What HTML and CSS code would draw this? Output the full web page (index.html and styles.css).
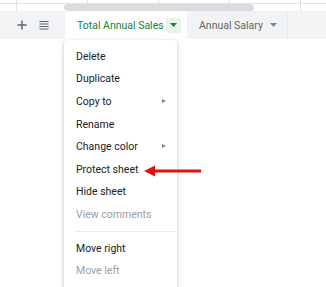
FILE: index.html
```html
<!DOCTYPE html>
<html>
<head>
<meta charset="utf-8">
<link rel="stylesheet" href="styles.css">
</head>
<body>
<div class="page">
  <div class="grid">
    <div class="cells">
      <div class="cell c0"></div>
      <div class="cell c1"></div>
      <div class="cell c1"></div>
      <div class="cell c1"></div>
      <div class="cell c1"></div>
      <div class="cell c2"></div>
    </div>
    <div class="thumb"></div>
  </div>
  <div class="tabbar">
    <div class="tools">
      <svg class="ico" width="12" height="12" viewBox="0 0 12 12"><path d="M6 1.5v9M1.5 6h9" stroke="#5f6368" stroke-width="1.4"/></svg>
      <svg class="ico" width="12" height="12" viewBox="0 0 12 12"><path d="M1.5 2.5h9M1.5 5h9M1.5 7.5h9M1.5 10h9" stroke="#5f6368" stroke-width="1.2"/></svg>
    </div>
    <div class="tab active">
      <span class="lbl">Total Annual Sales</span>
      <span class="dd"><svg width="7" height="4" viewBox="0 0 7 4"><path d="M0 0h7L3.5 4z" fill="#188038"/></svg></span>
    </div>
    <div class="tab">
      <span class="lbl">Annual Salary</span>
      <span class="dd plain"><svg width="7" height="4" viewBox="0 0 7 4"><path d="M0 0h7L3.5 4z" fill="#80868b"/></svg></span>
    </div>
    <div class="rest"></div>
  </div>
  <div class="content">
    <div class="menu">
      <div class="item">Delete</div>
      <div class="item">Duplicate</div>
      <div class="item">Copy to <span class="sub"></span></div>
      <div class="item">Rename</div>
      <div class="item">Change color <span class="sub"></span></div>
      <div class="item">Protect sheet</div>
      <div class="item">Hide sheet</div>
      <div class="item dis">View comments</div>
      <div class="sep"></div>
      <div class="item">Move right</div>
      <div class="item dis">Move left</div>
    </div>
    <svg class="arrow" width="58" height="12" viewBox="0 0 58 12"><path d="M10 6H57" stroke="#e01010" stroke-width="3"/><path d="M0 6L11 0.5V11.5z" fill="#e01010"/></svg>
  </div>
</div>
</body>
</html>
```
FILE: styles.css
```css
html, body {
  margin: 0;
  padding: 0;
  background: #fff;
}
.page {
  width: 326px;
  height: 287px;
  overflow: hidden;
  font-family: Roboto, "Liberation Sans", sans-serif;
  position: relative;
}
.grid {
  height: 11px;
  position: relative;
  background: #fff;
}
.cells {
  display: flex;
  height: 11px;
}
.cell {
  border-right: 1px solid #e2e3e3;
  height: 11px;
  box-sizing: border-box;
}
.cells .cell {
  background: linear-gradient(#e2e3e3, #e2e3e3) 0 3px / 100% 1px no-repeat;
}
.c0 { width: 17px; background: #f8f9fa; }
.c1 { width: 71px; }
.c2 { flex: 1; border-right: none; }
.thumb {
  position: absolute;
  left: 64px;
  top: 4px;
  width: 190px;
  height: 7px;
  border-radius: 4px;
  background: #dadce0;
}
.tabbar {
  display: flex;
  height: 28px;
  background: #f1f3f4;
  font-size: 10.5px;
  align-items: stretch;
  white-space: nowrap;
}
.tools {
  width: 65px;
  flex: none;
  display: flex;
  align-items: center;
  gap: 10px;
  padding-left: 16px;
  box-sizing: border-box;
}
.ico { display: block; }
.tab {
  flex: none;
  display: flex;
  align-items: center;
  padding: 0 8px 0 12px;
  color: #5f6368;
  gap: 3px;
}
.lbl { flex: 1; }
.tab.active {
  background: #fff;
  color: #188038;
  width: 122px;
  box-sizing: border-box;
  padding: 0 8px 0 12px;
  gap: 2px;
}
.tab:not(.active) {
  width: 101px;
  box-sizing: border-box;
  border-right: 1px solid #e8eaed;
}
.dd {
  flex: none;
  width: 15px;
  height: 15px;
  background: #e6f4ea;
  border-radius: 2px;
  display: flex;
  align-items: center;
  justify-content: center;
}
.dd.plain { background: transparent; }
.rest { flex: 1; background: #f3f4f5; }
.content {
  position: relative;
  height: 248px;
}
.menu {
  position: absolute;
  left: 64px;
  top: 1px;
  width: 113px;
  height: 260px;
  background: #fff;
  box-shadow: 0 1px 3px rgba(60,64,67,0.25), 0 2px 6px rgba(60,64,67,0.12);
  border-radius: 4px;
  padding-top: 5px;
  box-sizing: border-box;
  font-size: 10.5px;
  color: #202124;
}
.item {
  height: 22.6px;
  display: flex;
  align-items: center;
  padding-left: 12px;
  position: relative;
}
.item.dis { color: #9aa0a6; }
.sub {
  position: absolute;
  left: 98px;
  top: 9px;
  width: 0;
  height: 0;
  border-left: 4px solid #80868b;
  border-top: 2.5px solid transparent;
  border-bottom: 2.5px solid transparent;
}
.sep {
  height: 1px;
  background: #e8eaed;
  margin: 5px 2px 5px 11px;
}
.arrow {
  position: absolute;
  left: 144px;
  top: 126px;
}
```
